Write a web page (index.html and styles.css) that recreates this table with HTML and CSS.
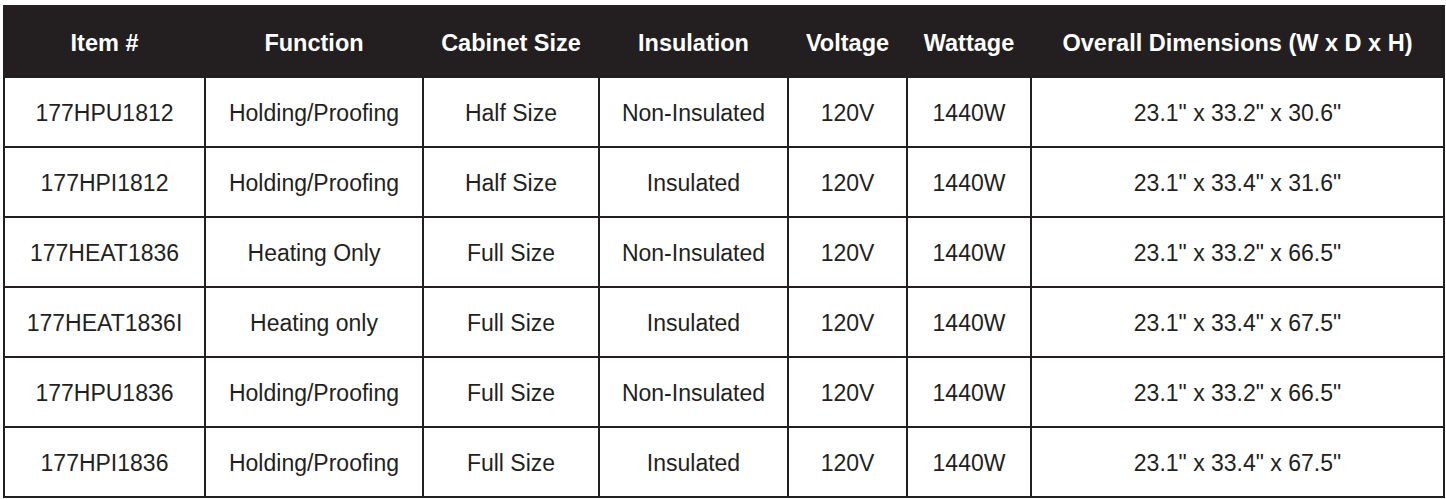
FILE: index.html
```html
<!DOCTYPE html>
<html lang="en">
<head>
<meta charset="utf-8">
<title>Cabinet Specifications</title>
<link rel="stylesheet" href="styles.css">
</head>
<body>
<div class="wrap">
<table class="spec">
  <colgroup>
    <col class="c1"><col class="c2"><col class="c3"><col class="c4"><col class="c5"><col class="c6"><col class="c7">
  </colgroup>
  <thead>
    <tr>
      <th>Item #</th><th>Function</th><th>Cabinet Size</th><th>Insulation</th><th>Voltage</th><th>Wattage</th><th>Overall Dimensions (W x D x H)</th>
    </tr>
  </thead>
  <tbody>
    <tr><td>177HPU1812</td><td>Holding/Proofing</td><td>Half Size</td><td>Non-Insulated</td><td>120V</td><td>1440W</td><td>23.1" x 33.2" x 30.6"</td></tr>
    <tr><td>177HPI1812</td><td>Holding/Proofing</td><td>Half Size</td><td>Insulated</td><td>120V</td><td>1440W</td><td>23.1" x 33.4" x 31.6"</td></tr>
    <tr><td>177HEAT1836</td><td>Heating Only</td><td>Full Size</td><td>Non-Insulated</td><td>120V</td><td>1440W</td><td>23.1" x 33.2" x 66.5"</td></tr>
    <tr><td>177HEAT1836I</td><td>Heating only</td><td>Full Size</td><td>Insulated</td><td>120V</td><td>1440W</td><td>23.1" x 33.4" x 67.5"</td></tr>
    <tr><td>177HPU1836</td><td>Holding/Proofing</td><td>Full Size</td><td>Non-Insulated</td><td>120V</td><td>1440W</td><td>23.1" x 33.2" x 66.5"</td></tr>
    <tr><td>177HPI1836</td><td>Holding/Proofing</td><td>Full Size</td><td>Insulated</td><td>120V</td><td>1440W</td><td>23.1" x 33.4" x 67.5"</td></tr>
  </tbody>
</table>
</div>
</body>
</html>
```

FILE: styles.css
```css
html, body {
  margin: 0;
  padding: 0;
  background: #ffffff;
}
.wrap {
  padding: 5px 3px 0 3px;
}
.spec {
  width: 1440px;
  table-layout: fixed;
  border-collapse: collapse;
  font-family: "Liberation Sans", Arial, Helvetica, sans-serif;
  color: #231f20;
}
.c1 { width: 201px; }
.c2 { width: 218px; }
.c3 { width: 176px; }
.c4 { width: 189px; }
.c5 { width: 119px; }
.c6 { width: 124px; }
.c7 { width: 413px; }
.spec th {
  background: #231f20;
  color: #ffffff;
  font-weight: bold;
  font-size: 23.5px;
  height: 66px;
  padding: 3px 0 0 0;
  text-align: center;
  vertical-align: middle;
  border: 2px solid #231f20;
  white-space: nowrap;
}
.spec td {
  font-size: 23px;
  height: 65px;
  padding: 3px 0 0 0;
  text-align: center;
  vertical-align: middle;
  border: 2px solid #231f20;
  white-space: nowrap;
}
```
